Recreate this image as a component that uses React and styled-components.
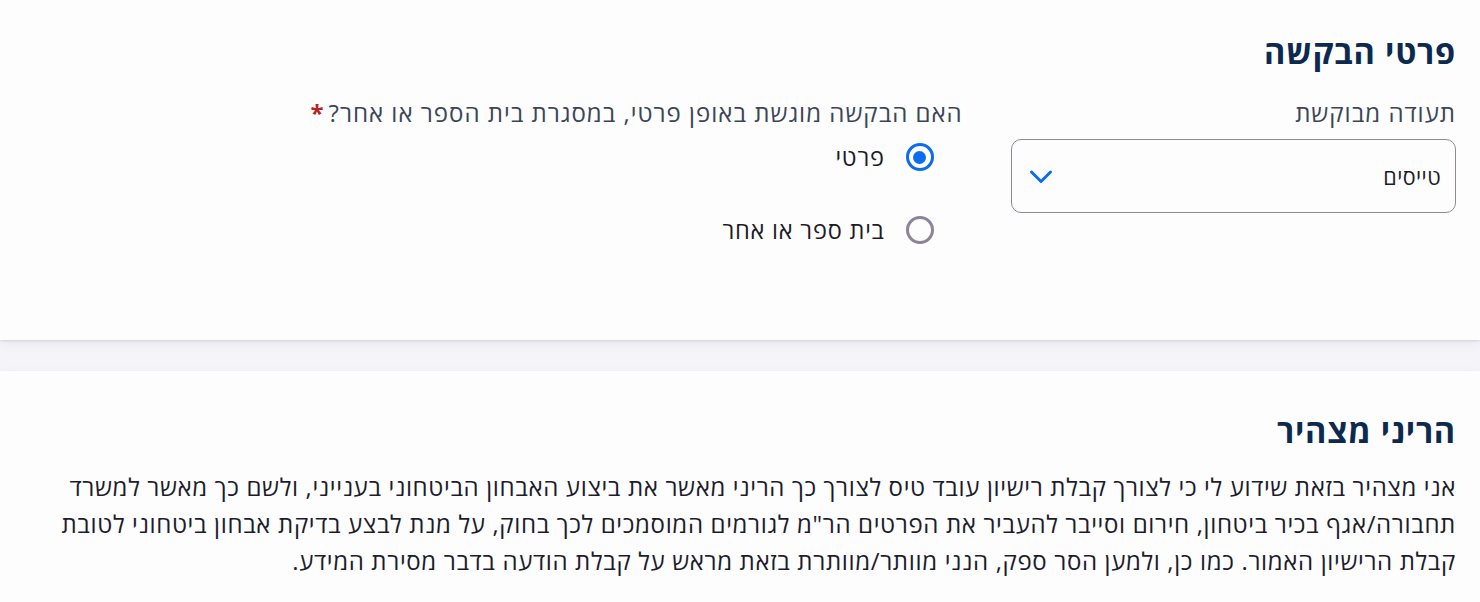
import React from "react";
import styled, { createGlobalStyle } from "styled-components";

const Global = createGlobalStyle`
  html, body { margin: 0; padding: 0; background: #f5f5f9; }
  body { font-family: "Open Sans", "Noto Sans Hebrew", "DejaVu Sans", sans-serif; direction: rtl; }
  * { box-sizing: border-box; }
`;

const Page = styled.div`
  display: flex;
  flex-direction: column;
  gap: 31px;
  width: 1480px;
`;

const Card = styled.section`
  background: #fdfdfe;
  padding: ${(p) => p.$pad};
  min-height: ${(p) => p.$minH || "auto"};
  box-shadow: 0 1px 2px rgba(60, 60, 90, 0.12), 0 4px 10px rgba(60, 60, 90, 0.08);
`;

const Title = styled.h2`
  margin: 0;
  font-size: 32.5px;
  line-height: 40px;
  font-weight: 700;
  letter-spacing: 0.8px;
  color: #0c2a50;
`;

const FormGrid = styled.div`
  display: grid;
  grid-template-columns: repeat(3, 1fr);
  column-gap: 48px;
  margin-top: 25px;
`;

const Field = styled.div`
  grid-column: span ${(p) => p.$span || 1};
  display: flex;
  flex-direction: column;
`;

const Label = styled.div`
  font-size: 24px;
  line-height: 32px;
  letter-spacing: 1px;
  color: #3b4657;
`;

const Req = styled.span`
  color: #b3261e;
  font-weight: 700;
  margin-right: 4px;
`;

const Select = styled.div`
  margin-top: 10px;
  height: 74px;
  border: 1px solid #8e8a9b;
  border-radius: 10px;
  display: flex;
  align-items: center;
  justify-content: space-between;
  padding: 0 14px 0 16px;
  font-size: 21.5px;
  letter-spacing: 0.4px;
  color: #1d1b26;
`;

const RadioList = styled.div`
  display: flex;
  flex-direction: column;
  gap: 45px;
  margin-top: 14px;
  padding-right: 29px;
`;

const RadioRow = styled.label`
  display: flex;
  align-items: center;
  gap: 21px;
  font-size: 23.5px;
  letter-spacing: 0.8px;
  color: #1d1b26;
  line-height: 28px;
`;

const Circle = styled.span`
  width: 28px;
  height: 28px;
  border-radius: 50%;
  border: 3px solid ${(p) => (p.$on ? "#0b6cf0" : "#8c8599")};
  display: flex;
  align-items: center;
  justify-content: center;
  flex: none;
  &::after {
    content: "";
    width: 13px;
    height: 13px;
    border-radius: 50%;
    background: ${(p) => (p.$on ? "#0b6cf0" : "transparent")};
  }
`;

const Para = styled.p`
  margin: 17px 0 0;
  padding-left: 30px;
  font-size: 24px;
  line-height: 37px;
  letter-spacing: 0.65px;
  color: #1c1c2c;
`;

const Chevron = () => (
  <svg width="26" height="26" viewBox="0 0 26 26" fill="none" stroke="#0b6cf0" strokeWidth="3" strokeLinecap="round" strokeLinejoin="round">
    <path d="M3.5 9l9.5 9.5 9.5-9.5" />
  </svg>
);

export default function App() {
  return (
    <>
      <Global />
      <Page>
        <Card $pad="32px 24px 0" $minH="340px">
          <Title>פרטי הבקשה</Title>
          <FormGrid>
            <Field>
              <Label>תעודה מבוקשת</Label>
              <Select>
                <span>טייסים</span>
                <Chevron />
              </Select>
            </Field>
            <Field $span={2}>
              <Label>
                האם הבקשה מוגשת באופן פרטי, במסגרת בית הספר או אחר?<Req>*</Req>
              </Label>
              <RadioList>
                <RadioRow>
                  <Circle $on />
                  פרטי
                </RadioRow>
                <RadioRow>
                  <Circle />
                  בית ספר או אחר
                </RadioRow>
              </RadioList>
            </Field>
          </FormGrid>
        </Card>
        <Card $pad="40px 24px 30px">
          <Title>הריני מצהיר</Title>
          <Para>
            אני מצהיר בזאת שידוע לי כי לצורך קבלת רישיון עובד טיס לצורך כך הריני מאשר את ביצוע האבחון הביטחוני בענייני, ולשם כך מאשר למשרד תחבורה/אגף בכיר ביטחון, חירום וסייבר להעביר את הפרטים הר"מ לגורמים המוסמכים לכך בחוק, על מנת לבצע בדיקת אבחון ביטחוני לטובת קבלת הרישיון האמור. כמו כן, ולמען הסר ספק, הנני מוותר/מוותרת בזאת מראש על קבלת הודעה בדבר מסירת המידע.
          </Para>
        </Card>
      </Page>
    </>
  );
}
